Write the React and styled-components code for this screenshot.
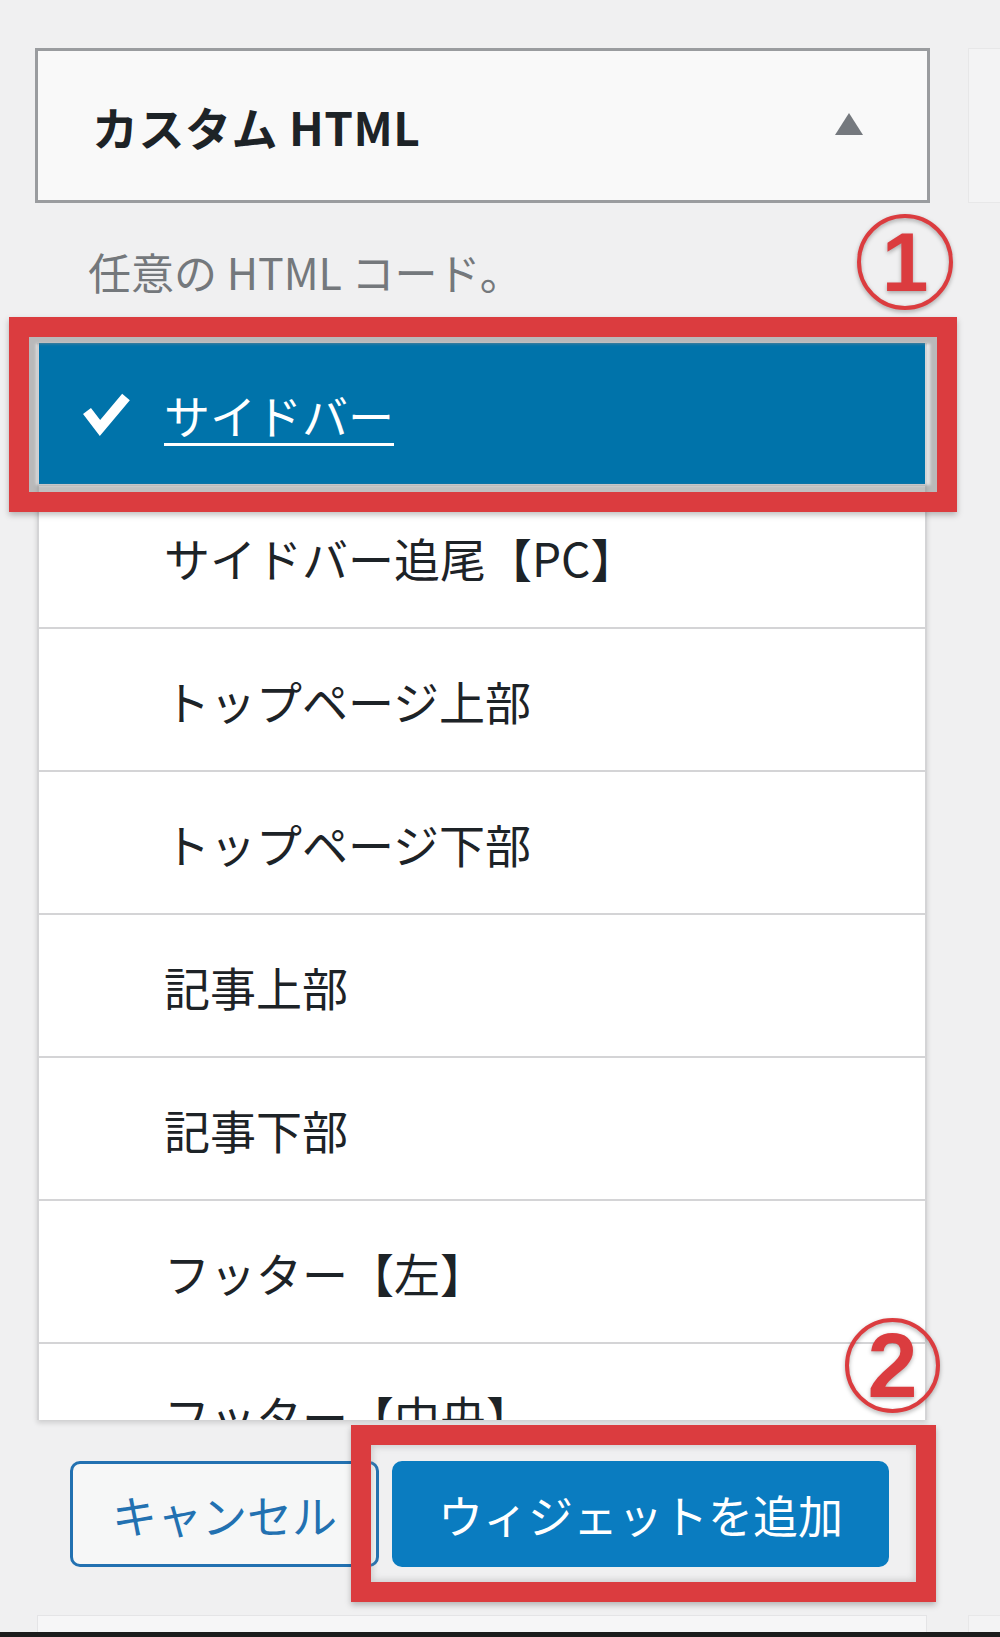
import React from "react";
import styled, { createGlobalStyle } from "styled-components";

const GlobalStyle = createGlobalStyle`
  html, body {
    margin: 0;
    padding: 0;
    background: #f0f0f1;
  }
  * {
    box-sizing: border-box;
  }
`;

const areas = [
  "サイドバー",
  "サイドバー追尾【PC】",
  "トップページ上部",
  "トップページ下部",
  "記事上部",
  "記事下部",
  "フッター【左】",
  "フッター【中央】",
];

function App() {
  return (
    <>
      <GlobalStyle />
      <StyledPage>
        <div className="body">
          <Main>
            <Header>
              <span className="title">カスタム HTML</span>
              <span className="arrow" />
            </Header>
            <Description>任意の HTML コード。</Description>
            <AreaList>
              {areas.map((name, i) => (
                <AreaRow key={name} $selected={i === 0}>
                  <span className="check">
                    {i === 0 && (
                      <svg width="50" height="48" viewBox="0 0 50 48">
                        <polyline
                          points="6,21 19,38 45,7"
                          fill="none"
                          stroke="#fff"
                          strokeWidth="10"
                          strokeLinejoin="miter"
                        />
                      </svg>
                    )}
                  </span>
                  <span className="label">{name}</span>
                </AreaRow>
              ))}
            </AreaList>
            <Actions>
              <Button>キャンセル</Button>
              <Button $primary>ウィジェットを追加</Button>
            </Actions>
            <FooterPanel />
          </Main>
          <Side>
            <div className="panel top" />
            <div className="panel bottom" />
          </Side>
        </div>
        <div className="bar" />

        <RedBox $left={9} $top={317} $width={948} $height={195} />
        <RedBox $left={351} $top={1425} $width={585} $height={177} $soft />
        <Badge $left={857} $top={214} $size={96} $font={84}>
          1
        </Badge>
        <Badge $left={845} $top={1318} $size={95} $font={90}>
          2
        </Badge>
      </StyledPage>
    </>
  );
}

const StyledPage = styled.div`
  position: relative;
  width: 1000px;
  height: 1637px;
  background: #f0f0f1;
  display: flex;
  flex-direction: column;
  overflow: hidden;
  font-family: "Noto Sans CJK JP", "Noto Sans", sans-serif;

  .body {
    flex: 1;
    display: flex;
  }
  .bar {
    height: 5px;
    background: #1c1c1c;
  }
`;

const Main = styled.div`
  width: 895px;
  margin-left: 35px;
  padding-top: 48px;
  display: flex;
  flex-direction: column;
`;

const Side = styled.div`
  flex: 1;
  margin-left: 38px;
  padding-top: 48px;
  display: flex;
  flex-direction: column;
  justify-content: space-between;

  .panel {
    background: #f3f3f4;
    border: 1px solid #e7e7e8;
    border-right: none;
  }
  .top {
    height: 155px;
  }
  .bottom {
    height: 17px;
    border-bottom: none;
  }
`;

const Header = styled.div`
  height: 155px;
  border: 3px solid #9a9c9f;
  background: #f9f9f9;
  display: flex;
  align-items: center;
  justify-content: space-between;
  padding: 0 64px 0 54px;

  .title {
    font-size: 46px;
    font-weight: 700;
    color: #1d2327;
    letter-spacing: 0.5px;
  }
  .arrow {
    width: 0;
    height: 0;
    border-left: 14px solid transparent;
    border-right: 14px solid transparent;
    border-bottom: 22px solid #75797e;
    margin-top: -4px;
  }
`;

const Description = styled.div`
  height: 140px;
  display: flex;
  align-items: center;
  padding: 0 0 4px 53px;
  font-size: 43px;
  color: #74787c;
`;

const AreaList = styled.div`
  margin-left: 2px;
  width: 890px;
  height: 1077px;
  overflow: hidden;
  background: #fff;
  border-left: 2px solid #d4d4d6;
  border-right: 2px solid #d4d4d6;
  box-shadow: 0 3px 5px rgba(0, 0, 0, 0.14);
`;

const AreaRow = styled.div`
  height: 143px;
  flex-shrink: 0;
  display: grid;
  grid-template-columns: 125px 1fr;
  align-items: center;
  border-bottom: 2px solid #d4d4d6;
  background: ${(p) => (p.$selected ? "#0073aa" : "#fff")};
  color: ${(p) => (p.$selected ? "#fff" : "#1d2327")};
  font-size: 46px;

  .check {
    justify-self: end;
    margin-right: 33px;
    display: flex;
  }
  .label {
    text-decoration: ${(p) => (p.$selected ? "underline" : "none")};
    text-decoration-thickness: 3px;
    text-underline-offset: 9px;
  }
`;

const Actions = styled.div`
  height: 195px;
  display: flex;
  align-items: flex-start;
  gap: 13px;
  padding: 41px 0 0 35px;
`;

const Button = styled.button`
  height: 106px;
  width: ${(p) => (p.$primary ? "497px" : "309px")};
  border-radius: 10px;
  border: 3px solid #1f72b0;
  background: ${(p) => (p.$primary ? "#0a7cc0" : "#f6f7f7")};
  color: ${(p) => (p.$primary ? "#fff" : "#2271b1")};
  border-color: ${(p) => (p.$primary ? "#0a7cc0" : "#2271b1")};
  font-family: "Noto Sans CJK JP", "Noto Sans", sans-serif;
  font-size: 45px;
  padding: 0;
  display: flex;
  align-items: center;
  justify-content: center;
`;

const FooterPanel = styled.div`
  height: 17px;
  margin-left: 2px;
  width: 890px;
  background: #f6f6f7;
  border: 1px solid #e4e4e6;
  border-bottom: none;
`;

const RedBox = styled.div`
  position: absolute;
  left: ${(p) => p.$left}px;
  top: ${(p) => p.$top}px;
  width: ${(p) => p.$width}px;
  height: ${(p) => p.$height}px;
  border: 20px solid #db3c3f;
  box-shadow: ${(p) =>
    p.$soft
      ? "inset 0 0 6px 2px rgba(140, 140, 140, 0.35), 0 3px 6px rgba(0, 0, 0, 0.25)"
      : "inset 0 0 3px 7px rgba(140, 140, 140, 0.55), 0 3px 6px rgba(0, 0, 0, 0.25)"};
  pointer-events: none;
`;

const Badge = styled.div`
  position: absolute;
  left: ${(p) => p.$left}px;
  top: ${(p) => p.$top}px;
  width: ${(p) => p.$size}px;
  height: ${(p) => p.$size}px;
  border: 4px solid #db3c3f;
  border-radius: 50%;
  display: flex;
  align-items: center;
  justify-content: center;
  color: #db3c3f;
  font-family: "Liberation Sans", Arial, sans-serif;
  font-weight: 700;
  font-size: ${(p) => p.$font}px;
  line-height: 1;
  filter: drop-shadow(0 2px 2px rgba(0, 0, 0, 0.3));
`;

export default App;
